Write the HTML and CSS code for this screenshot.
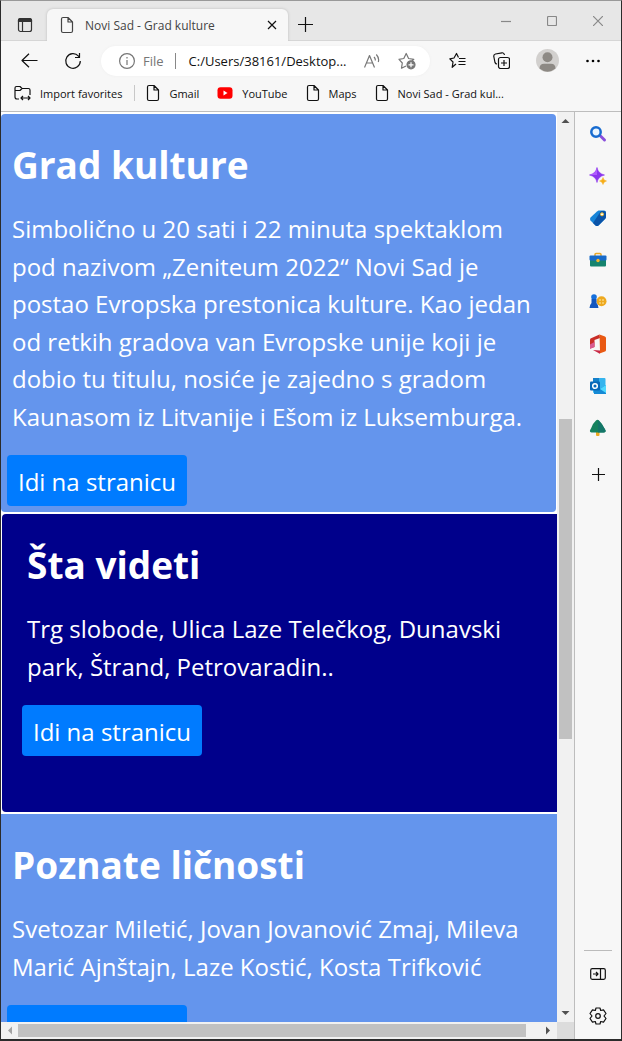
FILE: index.html
```html
<!DOCTYPE html>
<html lang="sr-Latn">
<head>
<meta charset="utf-8">
<meta name="viewport" content="width=device-width, initial-scale=1">
<title>Novi Sad - Grad kulture</title>
<link rel="stylesheet" href="styles.css">
</head>
<body>
<svg class="defs" aria-hidden="true">
  <symbol id="page" viewBox="0 0 14 18"><path d="M1.500 3Q1.500 1.500 3 1.500H8L12.500 6V15Q12.500 16.500 11 16.500H3Q1.500 16.500 1.500 15ZM8 1.500V6H12.500"/></symbol>
</svg>
<div class="window">
  <header class="tabs">
    <button class="icon-btn tab-menu" aria-label="Tab actions"><svg class="line" width="16" height="16" viewBox="0 0 16 16"><rect x="1.500" y="1.500" width="13" height="13" rx="2"/><path class="dark" d="M1.500 4.500V3.500Q1.500 1.500 3.500 1.500H12.500Q14.500 1.500 14.500 3.500V4.500Z"/><path d="M5.500 5V14.500"/></svg></button>
    <div class="tab">
      <svg class="line" width="14" height="18"><use href="#page"/></svg>
      <span class="tab-title">Novi Sad - Grad kulture</span>
      <button class="icon-btn" aria-label="Close tab"><svg class="line" width="10" height="10" viewBox="0 0 10 10"><path d="M1 1 9 9M9 1 1 9"/></svg></button>
    </div>
    <button class="icon-btn new-tab" aria-label="New tab"><svg class="line" width="15" height="15" viewBox="0 0 15 15"><path d="M7.500 0V15M0 7.500H15"/></svg></button>
    <div class="controls">
      <button class="icon-btn" aria-label="Minimize"><svg class="line" width="10" height="10" viewBox="0 0 10 10"><path d="M0 5.500H10"/></svg></button>
      <button class="icon-btn" aria-label="Maximize"><svg class="line" width="10" height="10" viewBox="0 0 10 10"><rect x=".5" y=".5" width="9" height="9" rx="1"/></svg></button>
      <button class="icon-btn" aria-label="Close"><svg class="line" width="10" height="10" viewBox="0 0 10 10"><path d="M0 0 10 10M10 0 0 10"/></svg></button>
    </div>
  </header>

  <div class="toolbar">
    <button class="icon-btn" aria-label="Back"><svg class="line" width="17" height="15" viewBox="0 0 17 15"><path d="M16.500 7.500H1M8 .7 1 7.500 8 14.300"/></svg></button>
    <button class="icon-btn reload" aria-label="Reload"><svg class="line" width="18" height="18" viewBox="0 0 18 18"><path d="M16.300 9A7.300 7.300 0 1 1 14.500 4.200L15.500 5.500M15.500 1V5.500H11"/></svg></button>
    <div class="address">
      <svg class="line" width="16" height="16" viewBox="0 0 16 16"><circle cx="8" cy="8" r="7.400"/><path d="M8 7V12M8 4V5.500"/></svg>
      <span class="scheme">File</span>
      <span class="bar"></span>
      <span class="url">C:/Users/38161/Desktop...</span>
      <button class="icon-btn read" aria-label="Read aloud"><svg class="line" width="16" height="16" viewBox="0 0 16 16"><path d="M.5 14.500 5.500 2.500 10.500 14.500M2.500 10H8.700M10 4Q11.500 5.500 11.300 7.500M12.300 1.500Q15.500 5 14.300 9"/></svg></button>
      <button class="icon-btn" aria-label="Add to favorites"><svg class="line" width="18" height="18" viewBox="0 0 18 18"><path d="M8 14 3.500 16.200 4.300 11 1 7.300 5.800 6.500 8.200 1.500 10.600 6.500 15.800 7.300 14 9"/><circle class="filled" cx="13" cy="12.800" r="4"/><path class="white" d="M13 10.300V15.300M10.500 12.800H15.500"/></svg></button>
    </div>
    <button class="icon-btn favs" aria-label="Favorites"><svg class="line" width="17" height="17" viewBox="0 0 17 17"><path d="M7 12 3.200 15.300 4 10 .8 6.800 5 6 7.500 1.500 9.500 5.500M10 6.500H16.500M9.500 9.500H16.500M9.500 12.500H16.500"/></svg></button>
    <button class="icon-btn" aria-label="Collections"><svg class="line" width="17" height="17" viewBox="0 0 17 17"><rect x="5.500" y="5.500" width="11" height="11" rx="2"/><path d="M11 8V14M8 11H14M4 12Q2.500 12 2 10.500L.8 4.500Q.5 2.500 2.500 2L9 .8Q11 .500 11.500 3"/></svg></button>
    <button class="icon-btn avatar" aria-label="Profile"><svg width="23" height="23" viewBox="0 0 23 23"><circle cx="11.500" cy="11.500" r="11.500" fill="#d2d0ce"/><circle cx="11.500" cy="8.300" r="5" fill="#8d8984"/><path d="M3.500 19.500Q3.500 14.700 8 14.700H15Q19.500 14.700 19.500 19.500Q11.500 26 3.500 19.500" fill="#8d8984"/></svg></button>
    <button class="icon-btn" aria-label="More"><svg width="14" height="4" viewBox="0 0 14 4"><circle cx="1.500" cy="2" r="1.300"/><circle cx="7" cy="2" r="1.300"/><circle cx="12.500" cy="2" r="1.300"/></svg></button>
  </div>

  <nav class="bookmarks">
    <a class="mark" href="#"><svg class="line" width="17" height="16" viewBox="0 0 17 16"><path d="M5 14H3Q1 14 1 12V3Q1 1.500 2.500 1.500H6L8 3.500H14.500Q16 3.500 16 5V10M1 5.500H6L8 3.500M7 13H16M9 11 7 13 9 15M14 11 16 13 14 15"/></svg>Import favorites</a>
    <span class="bar"></span>
    <a class="mark" href="#"><svg class="line" width="14" height="18"><use href="#page"/></svg>Gmail</a>
    <a class="mark" href="#"><svg width="16" height="12" viewBox="0 0 16 12"><rect x=".5" y=".3" width="15" height="11.400" rx="3" fill="#f00"/><path d="M6.500 3.500V8.500L10.500 6Z" fill="#fff"/></svg>YouTube</a>
    <a class="mark" href="#"><svg class="line" width="14" height="18"><use href="#page"/></svg>Maps</a>
    <a class="mark" href="#"><svg class="line" width="14" height="18"><use href="#page"/></svg>Novi Sad - Grad kul...</a>
  </nav>

  <div class="body">
    <div class="viewport">
      <main class="content">
        <section class="card first">
          <h2>Grad kulture</h2>
          <p>Simbolično u 20 sati i 22 minuta spektaklom<br>pod nazivom „Zeniteum 2022“ Novi Sad je<br>postao Evropska prestonica kulture. Kao jedan<br>od retkih gradova van Evropske unije koji je<br>dobio tu titulu, nosiće je zajedno s gradom<br>Kaunasom iz Litvanije i Ešom iz Luksemburga.</p>
          <button class="go">Idi na stranicu</button>
        </section>
        <section class="card navy">
          <h2>Šta videti</h2>
          <p>Trg slobode, Ulica Laze Telečkog, Dunavski<br>park, Štrand, Petrovaradin..</p>
          <button class="go">Idi na stranicu</button>
        </section>
        <section class="card">
          <h2>Poznate ličnosti</h2>
          <p>Svetozar Miletić, Jovan Jovanović Zmaj, Mileva<br>Marić Ajnštajn, Laze Kostić, Kosta Trifković</p>
          <button class="go" aria-label="Idi na stranicu"></button>
        </section>
      </main>
      <div class="scroll-y">
        <svg width="9" height="5" viewBox="0 0 9 5"><path d="M.5 5 4.500 1 8.500 5Z" fill="#505050"/></svg>
        <div class="track-y"><div class="thumb-y"></div></div>
        <svg width="9" height="5" viewBox="0 0 9 5"><path d="M.5 0 4.500 4 8.500 0Z" fill="#505050"/></svg>
      </div>
      <div class="scroll-x">
        <svg width="5" height="9" viewBox="0 0 5 9"><path d="M5 .5 1 4.500 5 8.500Z" fill="#a3a3a3"/></svg>
        <div class="track-x"><div class="thumb-x"></div></div>
        <svg width="5" height="9" viewBox="0 0 5 9"><path d="M0 .5 4 4.500 0 8.500Z" fill="#505050"/></svg>
      </div>
      <div class="corner"></div>
    </div>
    <aside class="sidebar">
      <button class="icon-btn" aria-label="Search"><svg width="18" height="18" viewBox="0 0 18 18"><path d="M11.500 11 15.500 15" stroke="#8a4fdc" stroke-width="3" stroke-linecap="round"/><circle cx="7" cy="7" r="4.700" fill="#eaf5ff" stroke="#176bd0" stroke-width="2.500"/></svg></button>
      <button class="icon-btn" aria-label="Discover"><svg width="18" height="18" viewBox="0 0 18 18"><path d="M8 .5Q9 6.500 15.500 8Q9 9.500 8 15.500Q7 9.500 .5 8Q7 6.500 8 .5" fill="#8b35ec" stroke="#8b35ec" stroke-width=".6"/><path d="M.5 8Q7 6.500 8 .5V8Z" fill="#b05aff"/><path d="M14 10.500Q14.500 13.500 17.500 14Q14.500 14.500 14 17.500Q13.500 14.500 10.500 14Q13.500 13.500 14 10.500" fill="#f6ad16" stroke="#f6ad16" stroke-width=".5"/></svg></button>
      <button class="icon-btn" aria-label="Shopping"><svg width="18" height="18" viewBox="0 0 18 18"><path d="M9.500 1.500H15Q17 1.500 17 3.500V8Q17 9 16 10L9.500 16.500Q8 17.500 6.500 16.500L1.500 11.500Q.500 10 1.500 8.500L8 2.500Z" fill="#1684d8"/><path d="M12 2H15Q17 2 17 4V8Q17 9 16 10L9.500 16.500Q8 17.500 6.500 16.500L4 14Z" fill="#0b54a8"/><circle cx="13" cy="5.300" r="1.500" fill="#fff" stroke="#f4bd28"/></svg></button>
      <button class="icon-btn" aria-label="Tools"><svg width="18" height="18" viewBox="0 0 18 18"><path d="M6 5V3.500Q6 2.500 7 2.500H11Q12 2.500 12 3.500V5" fill="none" stroke="#e9a829" stroke-width="1.500"/><rect x="1" y="8" width="16" height="7.500" rx="1" fill="#15836e"/><rect x=".5" y="4.500" width="17" height="5" rx="1" fill="#176ac9"/><circle cx="9" cy="9.500" r="1.700" fill="#f5b72c"/></svg></button>
      <button class="icon-btn" aria-label="Games"><svg width="18" height="18" viewBox="0 0 18 18"><circle cx="12.500" cy="8.300" r="5" fill="#eea91f"/><g fill="#fff2ba"><circle cx="11" cy="7" r=".8"/><circle cx="14" cy="7" r=".8"/><circle cx="11" cy="10" r=".8"/><circle cx="14" cy="10" r=".8"/></g><circle cx="5" cy="4" r="2.800" fill="#1670dc"/><path d="M2.500 6H7.500V10Q9.500 12 9.500 15H.500Q.500 12 2.500 10Z" fill="#1557be"/></svg></button>
      <button class="icon-btn" aria-label="Office"><svg width="18" height="20" viewBox="0 0 18 20"><path d="M10.500 .5 1.500 4.500Q1 5 1 6V14.500L5.500 13V6L11 4Z" fill="#c92e28"/><path d="M1 10.500 5.500 8V13L1 15Z" fill="#d85b91"/><path d="M10.500 .5 16 2.500Q17 3 17 4V16Q17 17 16 17.500L10.500 19.500 11 16.500Z" fill="#e95913"/><path d="M4 16 11 16.500V19.500Q10 19.500 9.500 19Z" fill="#c92743"/></svg></button>
      <button class="icon-btn" aria-label="Outlook"><svg width="18" height="18" viewBox="0 0 18 18"><rect x="4" y="1" width="12.500" height="15" rx="1" fill="#35b4ee"/><path d="M4 1H10V6H4" fill="#1480ca"/><path d="M5 9 11 12 17 8V17H5Z" fill="#168ad5"/><path d="M11 12 17 8V16Z" fill="#50d9ff"/><rect x="1" y="4.500" width="10" height="9" rx="1" fill="#0868b8"/><circle cx="6" cy="9" r="2.300" fill="none" stroke="#fff" stroke-width="1.500"/></svg></button>
      <button class="icon-btn" aria-label="Tree"><svg width="18" height="18" viewBox="0 0 18 18"><rect x="7" y="12" width="3.500" height="5" rx="1" fill="#edaa21"/><path d="M7 1.500Q8.500 0 10 1.500L13 5 15.500 9.500Q18 13 15 13.500H2.500Q-.500 13 2 9.500L4 5Z" fill="#16825e"/><path d="M9 1 12.500 5 15.500 9.500Q18 13 15 13.500H9Z" fill="#147669"/></svg></button>
      <button class="icon-btn" aria-label="Add"><svg class="line" width="13" height="13" viewBox="0 0 13 13"><path d="M6.500 0V13M0 6.500H13"/></svg></button>
      <div class="divider"></div>
      <button class="icon-btn" aria-label="Hide sidebar"><svg class="line" width="16" height="12" viewBox="0 0 16 12"><rect x=".7" y=".7" width="14.600" height="10.600" rx="1.500"/><path d="M10.500 1V11M3 6H8M6 4 8 6 6 8"/></svg></button>
      <button class="icon-btn" aria-label="Settings"><svg class="line" width="18" height="18" viewBox="0 0 18 18"><path d="M7 1H11L11.700 3.500 14.500 2.800 17 6.500 15 9 17 11.500 14.500 15.200 11.700 14.500 11 17H7L6.300 14.500 3.500 15.200 1 11.500 3 9 1 6.500 3.500 2.800 6.300 3.500Z"/><circle cx="9" cy="9" r="2.300"/></svg></button>
    </aside>
  </div>
</div>
</body>
</html>
```

FILE: styles.css
```css
* { box-sizing: border-box; }
body { margin: 0; font-family: "Open Sans", "Noto Sans", sans-serif; background: #f7f7f7; }
svg { display: block; flex: none; }
.defs { position: absolute; width: 0; height: 0; }
.line { fill: none; stroke: currentColor; stroke-width: 1.2; stroke-linejoin: round; }
.dark, .filled { fill: currentColor; }
.white { stroke: #fff; }
.window { display: flex; flex-direction: column; height: 100vh; border: 1px solid #2b2b2b; border-top-color: #999; border-bottom-width: 2px; }
.icon-btn { display: flex; align-items: center; justify-content: center; padding: 0; border: 0; background: none; color: #111; flex: none; }
.bar { width: 1px; height: 16px; background: #c8c8c8; }

.tabs { display: flex; height: 40px; flex: none; background: #e7e7e7; border-bottom: 1px solid #d6d6d6; font-size: 12px; }
.tab-menu { width: 46px; padding-left: 2px; padding-top: 8px; color: #333; }
.tab { display: flex; align-items: center; width: 241px; height: 32px; margin-top: 8px; padding: 0 11px 0 13px; background: #f7f7f7; border-radius: 6px 6px 0 0; box-shadow: 0 0 3px #bbb; clip-path: inset(-4px -4px 0 -4px); color: #444; }
.tab-title { flex: 1; margin-left: 11px; white-space: nowrap; }
.new-tab { margin: 8px 0 0 10px; }
.controls { display: flex; gap: 36px; margin-left: auto; padding-right: 18px; }
.controls .icon-btn { color: #888; }

.toolbar { display: flex; align-items: center; height: 39px; flex: none; padding: 0 21px 0 20px; }
.reload { margin-left: 26px; }
.address { display: flex; align-items: center; flex: 1; min-width: 0; height: 30px; margin: 0 19px; padding: 0 14px 0 18px; border-radius: 15px; background: #fff; color: #767676; font-size: 13px; white-space: nowrap; box-shadow: 0 0 3px #eee; }
.address .icon-btn { color: #777; }
.scheme { margin: 0 11px 0 8px; }
.address .bar { background: #888; }
.url { margin-left: 13px; color: #111; flex: 1; }
.read { margin-right: 18px; }
.favs { margin-right: 27px; }
.avatar { margin: 0 27px 0 26px; }

.bookmarks { display: flex; align-items: center; height: 32px; flex: none; padding: 0 13px 5px; border-bottom: 1px solid #bdbdbd; font-size: 11px; white-space: nowrap; }
.mark { display: flex; align-items: center; gap: 9px; margin-right: 18px; color: #111; text-decoration: none; }
.mark:first-child { margin-right: 12px; }
.bookmarks .bar { margin-right: 11px; }

.body { display: flex; flex: 1; min-height: 0; }
.viewport { display: grid; grid-template: minmax(0, 1fr) 17px / minmax(0, 1fr) 17px; flex: 1; min-width: 0; border-right: 1px solid #bdbdbd; }
.content { overflow: hidden; padding-top: 2px; background: #fff; color: #fff; font-size: 25px; line-height: 150%; }
.card { padding: 27px 6px 6px; margin-bottom: 2px; background: cornflowerblue; white-space: nowrap; }
.first { margin-right: 1px; border-radius: 4px; }
.navy { padding-left: 20px; padding-bottom: 56px; margin-left: 1px; border-radius: 4px 0 0 4px; background: darkblue; }
h2 { margin: 0 5px 21px; font-size: 37px; line-height: 48px; font-weight: 700; }
p { margin: 0 5px 20px; font-size: 24px; }
.go { display: block; width: 180px; height: 51px; padding: 2px 0 0; border: 0; border-radius: 4px; background: #007bff; color: #fff; font: 24px "Open Sans", "Noto Sans", sans-serif; }

.scroll-y { display: flex; flex-direction: column; align-items: center; justify-content: space-between; padding: 6px 0; background: #f1f1f1; }
.track-y { width: 13px; flex: 1; padding: 296px 0 272px; }
.thumb-y { height: 100%; background: #c1c1c1; }
.scroll-x { display: flex; align-items: center; padding: 0 6px; background: #f1f1f1; }
.track-x { flex: 1; padding: 0 20px 0 6px; }
.thumb-x { height: 13px; background: #c1c1c1; }
.corner { background: #dcdcdc; }

.sidebar { display: flex; flex-direction: column; align-items: center; width: 46px; flex: none; padding: 10px 0 11px; }
.sidebar .icon-btn { width: 24px; height: 24px; margin-bottom: 18px; }
.sidebar .icon-btn:last-child { margin-bottom: 0; }
.sidebar .icon-btn:nth-child(9) { margin-top: 4px; }
.divider { width: 28px; height: 1px; margin: auto 0 11px; background: #bbb; }
```
